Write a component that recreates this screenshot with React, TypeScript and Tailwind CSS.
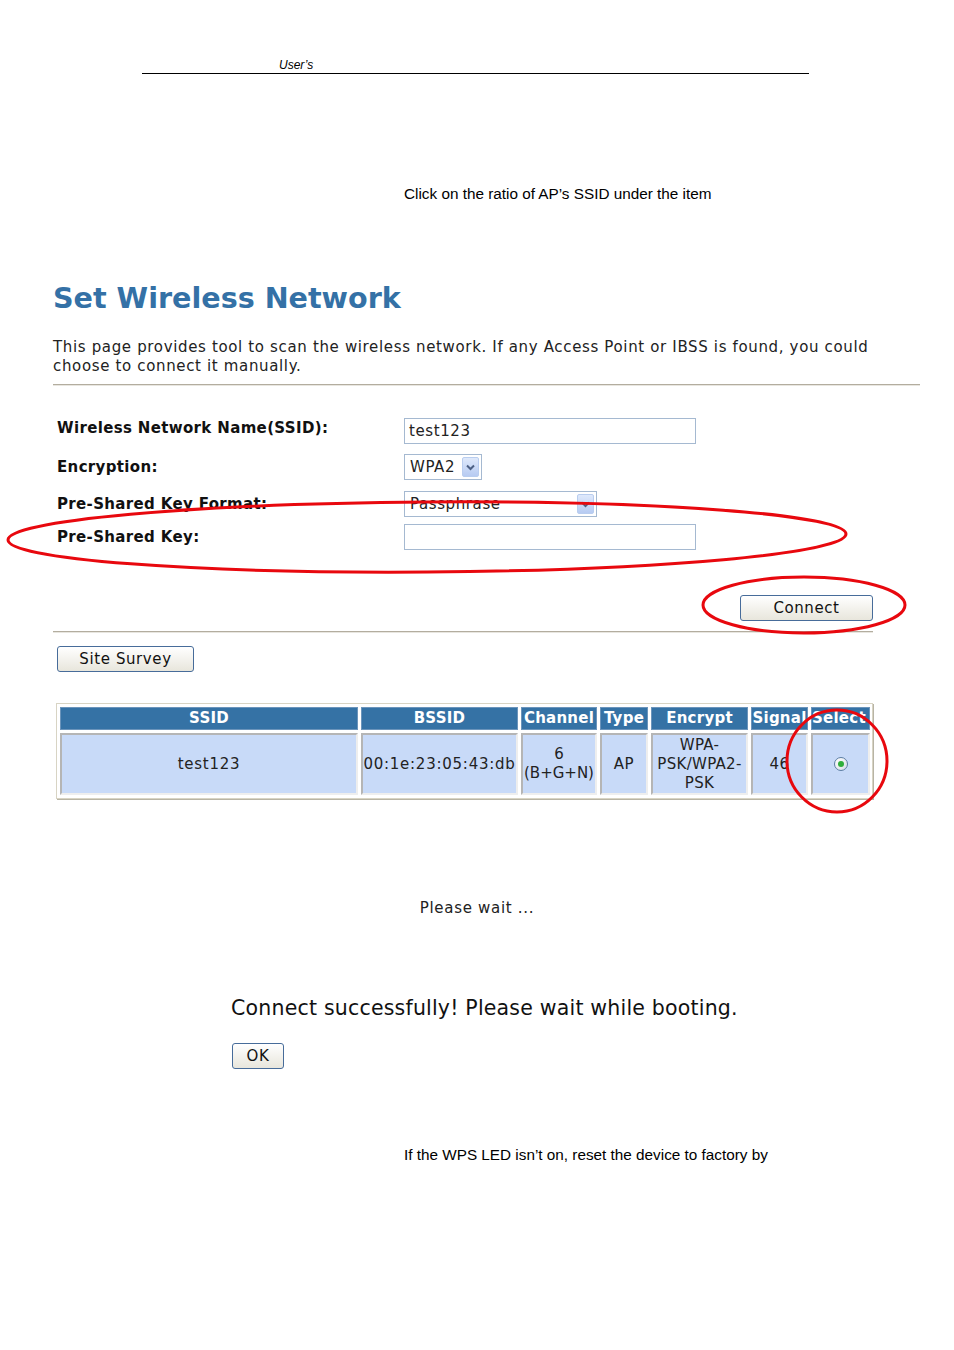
import React from "react";

const VERD = { fontFamily: '"DejaVu Sans", Verdana, sans-serif' };
const ARIAL = { fontFamily: '"Liberation Sans", Arial, sans-serif' };

function SelectBox({ value, width }: { value: string; width: string }) {
  return (
    <div
      className={`flex h-[26px] items-center justify-between border border-[#a5b9d1] bg-white pl-[5px] pr-[2px] ${width}`}
    >
      <span className="text-[15px] text-[#222]">{value}</span>
      <span className="flex h-[20px] w-[17px] items-center justify-center rounded-[2px] border border-[#b9cdef] bg-gradient-to-b from-[#dfe9fb] to-[#b7cbf2]">
        <svg width="9" height="7" viewBox="0 0 9 7">
          <path d="M1 1.5 L4.5 5 L8 1.5" fill="none" stroke="#4d6185" strokeWidth="2" />
        </svg>
      </span>
    </div>
  );
}

function Button({ label, className }: { label: string; className: string }) {
  return (
    <button
      className={`rounded-[3px] border border-[#476c9a] bg-gradient-to-b from-white to-[#e8e6dc] text-[15px] tracking-[0.6px] text-[#111] ${className}`}
      style={VERD}
    >
      {label}
    </button>
  );
}

const COLS = [
  { h: "SSID", w: "w-[298px]", t: "tracking-[0.75px]", v: "test123" },
  { h: "BSSID", w: "w-[157px]", t: "tracking-[0.75px]", v: "00:1e:23:05:43:db" },
  { h: "Channel", w: "w-[76px]", t: "tracking-normal", v: "6\n(B+G+N)" },
  { h: "Type", w: "w-[48px]", t: "tracking-[0.5px]", v: "AP" },
  { h: "Encrypt", w: "w-[97px]", t: "tracking-[0.3px]", v: "WPA-\nPSK/WPA2-\nPSK" },
  { h: "Signal", w: "w-[57px]", t: "tracking-[0.5px]", v: "46" },
  { h: "Select", w: "w-[59px]", t: "tracking-normal", v: "" },
];

export default function App() {
  return (
    <div className="relative h-[1350px] w-[954px] overflow-hidden bg-white">
      {/* page header */}
      <div className="ml-[142px] w-[667px] border-b border-black pt-[58px]">
        <p className="pl-[137px] text-[12px] italic leading-[15px] text-black" style={ARIAL}>
          User’s
        </p>
      </div>

      <p className="ml-[404px] mt-[111px] text-[15.3px] leading-[18px] text-black" style={ARIAL}>
        Click on the ratio of AP’s SSID under the item
      </p>

      {/* web UI screenshot */}
      <div className="ml-[53px] mt-[77px] w-[867px] tracking-[0.6px]" style={VERD}>
        <h1 className="text-[28.6px] font-bold leading-[36px] tracking-normal text-[#3471a6]">
          Set Wireless Network
        </h1>
        <p className="mt-[22px] text-[15px] leading-[19px] tracking-[0.65px] text-[#222]">
          This page provides tool to scan the wireless network. If any Access Point or IBSS is found, you could
          <br />
          choose to connect it manually.
        </p>
        <div className="mt-[8px] h-[2px] border-t border-[#b3ad9f] bg-[#e8e6e0]" />

        <div className="ml-[4px] mt-[32px] flex flex-col text-[15px] font-bold tracking-[0.35px] text-[#111]">
          <div className="flex items-center">
            <span className="w-[347px] -translate-y-[3px]">Wireless Network Name(SSID):</span>
            <div className="flex h-[26px] w-[292px] items-center border border-[#a5b9d1] pl-[4px] font-normal tracking-[0.6px] text-[#222]">
              test123
            </div>
          </div>
          <div className="mt-[10px] flex items-center">
            <span className="w-[347px]">Encryption:</span>
            <div className="font-normal tracking-[0.6px]">
              <SelectBox value="WPA2" width="w-[78px]" />
            </div>
          </div>
          <div className="mt-[11px] flex items-center">
            <span className="w-[347px]">Pre-Shared Key Format:</span>
            <div className="font-normal tracking-[0.6px]">
              <SelectBox value="Passphrase" width="w-[193px]" />
            </div>
          </div>
          <div className="mt-[7px] flex items-center">
            <span className="w-[347px]">Pre-Shared Key:</span>
            <div className="h-[26px] w-[292px] border border-[#a5b9d1]" />
          </div>
        </div>

        <div className="mt-[45px] flex w-[820px] justify-end">
          <Button label="Connect" className="h-[26px] w-[133px]" />
        </div>
        <div className="mt-[10px] h-[2px] w-[820px] border-t border-[#b3ad9f] bg-[#e8e6e0]" />

        <Button label="Site Survey" className="ml-[4px] mt-[13px] h-[26px] w-[137px]" />

        <div className="ml-[3px] mt-[31px] w-[817px] border border-[#d8d4c4] shadow-[1px_1px_0_#b8b4a4]">
          <table className="w-full table-fixed border-separate border-spacing-[3px]">
            <thead>
              <tr>
                {COLS.map((c) => (
                  <th
                    key={c.h}
                    className={`h-[23px] overflow-hidden whitespace-nowrap border border-[#6b94bb] bg-[#3572a5] p-0 text-center text-[15px] font-bold leading-[21px] tracking-[0.25px] text-white ${c.w}`}
                  >
                    <div className={`overflow-hidden ${c.h === "Select" ? "text-left" : ""}`}>{c.h}</div>
                  </th>
                ))}
              </tr>
            </thead>
            <tbody>
              <tr>
                {COLS.map((c) => (
                  <td
                    key={c.h}
                    className={`h-[62px] whitespace-pre-line border-[2px] border-t-[#b5b5b5] border-l-[#b5b5b5] border-r-[#eeeeee] border-b-[#eeeeee] bg-[#c8daf8] p-0 text-center text-[15px] leading-[19px] text-[#222] ${c.t} ${c.w}`}
                  >
                    {c.h === "Select" ? (
                      <span className="inline-flex h-[14px] w-[14px] items-center justify-center rounded-full border border-[#5c7ea3] bg-gradient-to-br from-white to-[#d6dde6] align-middle">
                        <span className="h-[6px] w-[6px] rounded-full bg-[#2fae3a]" />
                      </span>
                    ) : (
                      c.v
                    )}
                  </td>
                ))}
              </tr>
            </tbody>
          </table>
        </div>

        <p className="mt-[100px] w-[848px] text-center text-[15px] leading-[18px] tracking-[0.7px] text-[#222]">
          Please wait ...
        </p>

        <p className="ml-[178px] mt-[79px] text-[20.5px] leading-[24px] tracking-[0.2px] text-[#111]">
          Connect successfully! Please wait while booting.
        </p>
        <Button label="OK" className="ml-[179px] mt-[23px] h-[26px] w-[52px]" />
      </div>

      <p className="ml-[404px] mt-[77px] text-[15.3px] leading-[18px] text-black" style={ARIAL}>
        If the WPS LED isn’t on, reset the device to factory by
      </p>

      {/* red annotation marks */}
      <svg className="pointer-events-none absolute left-0 top-0" width="954" height="1350">
        <ellipse cx="427" cy="537" rx="419" ry="35" transform="rotate(-0.4 427 537)" fill="none" stroke="#e8080e" strokeWidth="3" />
        <ellipse cx="804" cy="605" rx="101" ry="28" fill="none" stroke="#e8080e" strokeWidth="3" />
        <ellipse cx="837" cy="761" rx="50" ry="51" fill="none" stroke="#e8080e" strokeWidth="3" />
      </svg>
    </div>
  );
}
